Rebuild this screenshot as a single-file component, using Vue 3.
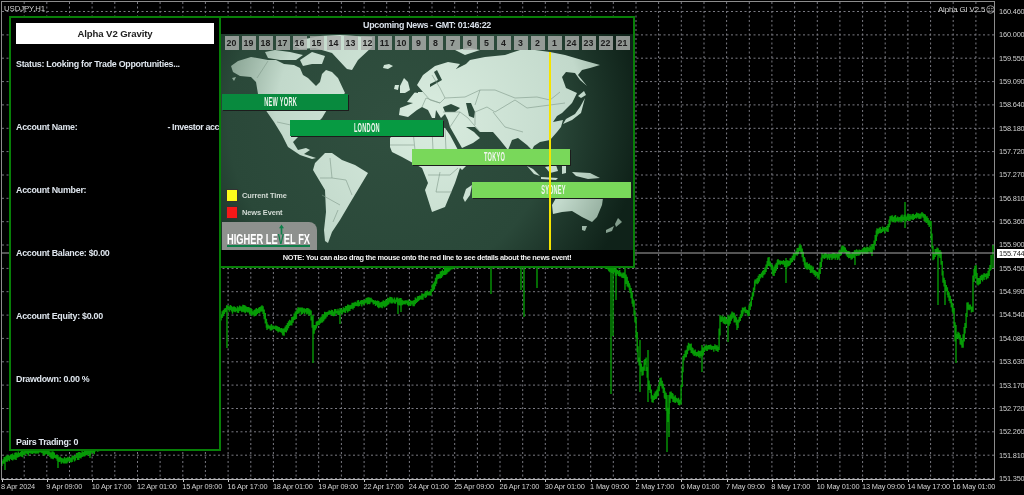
<script setup>
const prices = ['160.460','160.000','159.550','159.090','158.640','158.180','157.720','157.270','156.810','156.360','155.900','155.450','154.990','154.540','154.080','153.630','153.170','152.720','152.260','151.810','151.350']
const times = ['8 Apr 2024','9 Apr 09:00','10 Apr 17:00','12 Apr 01:00','15 Apr 09:00','16 Apr 17:00','18 Apr 01:00','19 Apr 09:00','22 Apr 17:00','24 Apr 01:00','25 Apr 09:00','26 Apr 17:00','30 Apr 01:00','1 May 09:00','2 May 17:00','6 May 01:00','7 May 09:00','8 May 17:00','10 May 01:00','13 May 09:00','14 May 17:00','16 May 01:00']
const hours = [20,19,18,17,16,15,14,13,12,11,10,9,8,7,6,5,4,3,2,1,24,23,22,21]
const stats = ['Status: Looking for Trade Opportunities...','Account Number:','Account Balance: $0.00','Account Equity: $0.00','Drawdown: 0.00 %','Pairs Trading: 0']

const gridPath = (() => {
  let d = ''
  for (let k = 0; k < 44; k++) d += `M${(1.5 + 22.66 * k).toFixed(1)} 2V479`
  for (let k = 0; k < 21; k++) d += `M2 ${(11.5 + 23.35 * k).toFixed(1)}H994`
  return d
})()

const pts = [[2,462],[5,459],[15,456],[25,452],[40,450],[55,456],[58,460],[70,459],[85,453],[91,451],[120,440],[215,330],[220,317],[227,307],[233,310],[243,308],[253,313],[262,308],[267,327],[277,328],[283,332],[292,320],[298,310],[310,312],[313,330],[317,323],[327,313],[340,312],[353,305],[370,300],[380,305],[390,300],[403,302],[412,303],[423,295],[430,293],[437,277],[450,267],[470,258],[520,262],[560,258],[600,262],[612,270],[625,277],[630,290],[633,303],[635,320],[638,360],[642,372],[645,360],[648,382],[652,400],[657,392],[660,380],[665,396],[667,420],[670,394],[673,398],[680,402],[683,358],[689,345],[693,352],[700,355],[705,347],[718,348],[720,318],[728,322],[732,314],[737,324],[743,309],[748,313],[755,282],[765,270],[768,260],[773,272],[778,262],[788,264],[795,254],[800,247],[805,264],[812,270],[818,276],[822,256],[838,256],[842,248],[850,256],[857,252],[870,249],[873,247],[877,231],[887,229],[890,219],[903,218],[910,217],[922,215],[927,220],[930,224],[932,247],[933,258],[936,250],[940,254],[943,280],[948,294],[953,310],[955,338],[958,335],[962,345],[965,325],[967,305],[972,310],[973,278],[975,268],[977,282],[983,276],[987,275],[990,268],[992,250]]
const wicks = [[5,460,470],[58,455,468],[90,448,458],[227,305,348],[313,315,363],[340,308,324],[398,300,314],[401,298,312],[491,262,294],[521,262,290],[524,262,317],[537,262,288],[611,262,394],[613,262,336],[616,262,300],[625,262,290],[640,340,392],[648,350,402],[667,395,452],[669,395,437],[702,345,372],[728,315,342],[737,320,330],[786,258,283],[855,250,265],[872,244,256],[905,202,228],[938,250,305],[945,280,305],[956,325,363],[993,245,268]]
const barPath = (() => {
  let seed = 7
  const rnd = () => (seed = (seed * 16807) % 2147483647) / 2147483647
  let d = ''
  let prev = pts[0][1]
  for (let i = 0; i < pts.length - 1; i++) {
    const [x1, y1] = pts[i], [x2, y2] = pts[i + 1]
    for (let x = x1; x < x2; x += 1.1) {
      const y = y1 + (y2 - y1) * (x - x1) / (x2 - x1)
      const top = Math.min(prev, y) - 1 - rnd() * 2.5
      const bottom = Math.max(prev, y) + 1.2 + rnd() * 3
      d += `M${x.toFixed(1)} ${top.toFixed(1)}V${bottom.toFixed(1)}`
      prev = y
    }
  }
  for (const [x, a, b] of wicks) d += `M${x} ${a}V${b}`
  return d
})()

const land = [
  // North America
  'M231 66L238 61L251 57L268 60L276 60L284 64L294 65L300 68L303 75L308 78L316 86L320 82L322 74L326 70L332 72L338 78L345 93L338 100L330 105L325 113L322 118L318 122L316 130L310 134L306 136L298 137L293 142L298 150L306 148L310 150L304 154L316 158L312 159L300 155L288 147L282 135L274 122L267 112L262 104L258 94L256 82L251 77L240 76L233 72Z',
  // Arctic islands
  'M265 52L275 50L290 52L303 55L296 60L280 60L268 58Z','M300 60L312 52L325 56L322 64L312 64L303 66Z','M232 78L236 77L234 81Z',
  // South America
  'M325 153L332 153L342 160L355 165L368 173L362 183L350 203L340 220L332 232L328 243L325 241L324 230L326 212L325 190L313 170L315 163Z',
  // Greenland
  'M293 45L300 40L320 36L340 35L372 37L372 47L358 60L352 70L347 69L345 67L332 53L315 48L300 49Z',
  'M384 65L389 64L393 66L388 69L383 68Z',
  // Ireland/UK
  'M400 86L404 78L408 82L410 90L405 93L400 93Z','M395 85L399 85L398 90L394 89Z',
  // Eurasia
  'M417 85L423 75L435 66L448 62L460 64L456 69L466 64L470 60L485 57L505 55L520 50L535 50L550 52L565 55L582 60L600 65L590 68L582 70L578 75L587 86L580 80L575 73L566 72L562 77L566 88L577 93L572 103L562 113L557 116L553 122L563 120L561 127L557 132L550 140L540 142L534 146L532 150L527 145L518 138L512 140L508 150L500 140L493 132L480 132L475 127L466 127L474 132L480 138L473 143L462 148L450 127L448 120L445 114L441 118L436 110L435 118L432 118L428 110L422 107L417 110L408 117L399 115L400 108L413 103L407 102L415 92L423 92Z',
  // Japan & islands
  'M580 107L585 98L581 113L572 120L563 124L566 119L575 114Z','M578 96L584 91L586 95L581 98Z','M455 50L470 48L480 50L465 55Z',
  // Africa
  'M390 147L390 138L400 128L412 122L430 126L445 128L450 135L458 150L468 150L478 150L472 160L462 170L460 168L455 183L445 207L432 212L425 190L428 183L422 168L402 157L392 152Z',
  'M472 185L470 195L465 202L463 198L466 189Z',
  // SE Asia and Indonesia
  'M527 166L533 169L540 176L534 174Z','M541 177L558 178L556 180L541 179Z','M545 167L556 165L558 171L550 173Z','M562 166L566 165L566 173L562 174Z','M572 172L590 173L600 178L588 179L576 176Z',
  // Australia
  'M552 205L556 198L570 192L603 198L602 205L597 217L592 222L582 217L572 211L562 212L553 214Z','M582 226L587 226L585 231L582 230Z',
  // New Zealand
  'M618 218L622 222L616 227L615 224Z','M606 230L614 226L612 231L606 233Z'
]
const seas = [
  'M430 87L442 80L437 70L434 72L438 80L430 84Z',
  'M443 107L451 104L460 108L455 112L445 112Z',
  'M466 103L471 103L475 112L474 118L469 116Z',
  'M412 92L418 90L418 93Z'
]
const borders = 'M268 61L257 78M277 122L300 127M312 100L262 103M465 97L480 90L495 90L515 98L537 97L550 100L560 92M487 107L495 112L515 100L527 108L550 105L565 103M493 112L505 127L523 132M480 90L475 105M487 107L475 112L475 125M423 92L430 100L440 103L445 98L465 97M432 75L440 88L445 98M422 107L426 98L440 103M443 112L460 112L468 118L480 132M460 112L450 127M432 128L433 150M412 122L415 150M445 128L446 150M428 175L450 175L458 168M436 192L452 192M440 172L436 192M330 158L332 178L346 180L352 195M320 178L332 178M322 195L340 205M333 222L338 210M390 145L414 145'
</script>

<template>
  <div class="terminal">
    <main class="chart">
      <svg class="plot" viewBox="2 2 992 477" aria-hidden="true">
        <path :d="gridPath" class="grid-lines" />
        <path :d="barPath" class="bars" />
        <path d="M2 253H994" class="price-line" />
      </svg>
      <span class="symbol">USDJPY,H1</span>
      <span class="ea-label">Alpha GI V2.5
        <svg class="smile" viewBox="0 0 10 10" aria-hidden="true"><circle cx="5" cy="5" r="4.2" /><circle cx="3.5" cy="4" r=".5" /><circle cx="6.5" cy="4" r=".5" /><path d="M3 6.2Q5 8 7 6.2" /></svg>
      </span>

      <section class="side-panel">
        <h1 class="panel-title">Alpha V2 Gravity</h1>
        <ul class="stat-list">
          <li>{{ stats[0] }}</li>
          <li class="name-row"><span>Account Name:</span><i class="redacted"></i><span class="investor">- Investor acc</span></li>
          <li v-for="s in stats.slice(1)" :key="s">{{ s }}</li>
        </ul>
      </section>

      <section class="news-panel">
        <h2 class="news-title">Upcoming News - GMT: 01:46:22</h2>
        <div class="stage">
          <svg class="map" viewBox="221 34 412 216" aria-hidden="true">
            <defs>
              <radialGradient id="sea" gradientUnits="userSpaceOnUse" cx="390" cy="120" r="250">
                <stop offset="0" stop-color="#304f3f" />
                <stop offset=".65" stop-color="#2a4839" />
                <stop offset="1" stop-color="#0f2219" />
              </radialGradient>
              <radialGradient id="landfill" gradientUnits="userSpaceOnUse" cx="430" cy="120" r="220">
                <stop offset="0" stop-color="#d9ecdf" />
                <stop offset=".7" stop-color="#c2d9cb" />
                <stop offset="1" stop-color="#7b9786" />
              </radialGradient>
            </defs>
            <rect x="221" y="34" width="412" height="216" fill="url(#sea)" />
            <path v-for="(d, i) in land" :key="i" :d="d" fill="url(#landfill)" />
            <path v-for="d in seas" :key="d" :d="d" class="inland-sea" />
            <path :d="borders" class="borders" />
          </svg>
          <div class="hour-row">
            <span v-for="h in hours" :key="h" class="hour">{{ h }}</span>
          </div>
          <div class="session ny"><span>NEW YORK</span></div>
          <div class="session ldn"><span>LONDON</span></div>
          <div class="session tyo"><span>TOKYO</span></div>
          <div class="session syd"><span>SYDNEY</span></div>
          <div class="now-line"></div>
          <ul class="legend">
            <li><i class="swatch yellow"></i>Current Time</li>
            <li><i class="swatch red"></i>News Event</li>
          </ul>
          <div class="logo">
            <div class="logo-line">
              <span class="logo-text">HIGHER LE<span class="logo-v">V</span>EL FX</span>
              <svg class="logo-arrow" viewBox="0 0 6 12" aria-hidden="true"><path d="M3 0L6 4.5H4V12H2V4.5H0Z" /></svg>
            </div>
          </div>
        </div>
        <p class="note">NOTE: You can also drag the mouse onto the red line to see details about the news event!</p>
      </section>
    </main>

    <aside class="price-axis">
      <span v-for="p in prices" :key="p">{{ p }}</span>
      <b class="price-tag">155.744</b>
    </aside>

    <footer class="time-axis">
      <span v-for="t in times" :key="t" class="tick">{{ t }}</span>
    </footer>
  </div>
</template>

<style scoped>
* { box-sizing: border-box; }
.terminal {
  width: 1024px; height: 495px; background: #000; overflow: hidden;
  display: grid; grid-template-columns: 995px 29px; grid-template-rows: 480px 15px;
  padding: 1px 0 0 1px; grid-template-areas: "c p" "t t";
  font-family: "Liberation Sans", Arial, sans-serif; position: relative;
  filter: blur(.3px);
}
.chart { grid-area: c; position: relative; width: 994px; height: 479px; border: 1px solid #8c8c8c; border-bottom-color: #b8b8b8; }
.plot { display: block; width: 992px; height: 477px; }
.grid-lines { fill: none; stroke: #7a7a82; stroke-width: 1; stroke-dasharray: 2 2.5; }
.bars { fill: none; stroke: #069a06; stroke-width: 1.4; }
.price-line { stroke: #a9a9a9; stroke-width: 1; }
.symbol { position: absolute; left: 2px; top: 2px; font-size: 7.8px; letter-spacing: -.1px; line-height: 9px; color: #d0d0d0; }
.ea-label { position: absolute; left: 936px; top: 3px; display: flex; align-items: center; gap: 1px; font-size: 7.8px; letter-spacing: -.1px; line-height: 9px; color: #d0d0d0; white-space: nowrap; }
.smile { width: 9px; height: 9px; fill: none; stroke: #c4c4c4; stroke-width: .8; }

.side-panel { position: absolute; left: 7px; top: 14px; width: 212px; height: 435px; background: #000; border: 2px solid #077f07; padding: 5px 5px 0 5px; overflow: hidden; }
.panel-title { margin: 0; height: 21px; background: #fff; color: #202020; font-size: 9.6px; letter-spacing: -.1px; line-height: 21px; font-weight: 700; text-align: center; }
.stat-list { list-style: none; margin: 0; padding: 0; display: flex; flex-direction: column; gap: 52px; padding-top: 15px; color: #dfe6ee; font-size: 8.9px; letter-spacing: -.28px; line-height: 11px; font-weight: 700; white-space: nowrap; }
.name-row { display: flex; }
.redacted { width: 90px; flex: none; }
.investor { letter-spacing: -.4px; }

.news-panel { position: absolute; left: 217px; top: 14px; width: 416px; height: 252px; background: #000; border: 2px solid #077f07; display: flex; flex-direction: column; overflow: hidden; }
.news-title { margin: 0; height: 16px; flex: none; color: #d9e0ea; font-size: 8.9px; letter-spacing: -.3px; line-height: 15px; font-weight: 700; text-align: center; }
.stage { position: relative; flex: 1; overflow: hidden; }
.map { position: absolute; left: 0; top: 0; width: 412px; height: 216px; display: block; }
.inland-sea { fill: #2d4b3c; }
.borders { fill: none; stroke: #7f9889; stroke-width: .6; }
.hour-row { position: relative; display: flex; gap: 3px; padding: 2px 0 0 3.5px; }
.hour { width: 14px; height: 14px; flex: none; background: rgba(172, 175, 172, .82); color: #1c1c1c; font-size: 8.8px; line-height: 14px; font-weight: 700; text-align: center; }
.session { position: absolute; height: 16px; display: flex; align-items: center; justify-content: center; color: #f2f6f0; font-size: 12.5px; font-weight: 700; box-shadow: 1px 1px 0 #1c1c1c; }
.session span { display: inline-block; transform: scaleX(.45); letter-spacing: .6px; white-space: nowrap; }
.ny { left: 1px; top: 60px; width: 126px; background: #088a3e; padding-right: 8px; }
.ldn { left: 69px; top: 86px; width: 153px; background: #079a42; }
.tyo { left: 191px; top: 115px; width: 158px; background: #79d85a; padding-left: 8px; }
.syd { left: 251px; top: 148px; width: 159px; background: #79d85a; padding-left: 4px; }
.now-line { position: absolute; left: 328px; top: 18px; bottom: 0; width: 2px; background: #f5e400; }
.legend { position: absolute; left: 5px; top: 155px; margin: 0; padding: 0; list-style: none; color: #d4dcd6; font-size: 7.4px; letter-spacing: -.1px; font-weight: 700; display: flex; flex-direction: column; gap: 4px; }
.legend li { display: flex; align-items: center; gap: 4px; height: 13px; }
.swatch { width: 12px; height: 13px; border: 1px solid #333; }
.yellow { background: #fbfb1c; }
.red { background: #f51818; }
.logo { position: absolute; left: 1px; bottom: 0; width: 95px; height: 28px; background: #8e918e; border-radius: 0 8px 0 0; padding: 10px 0 0 5px; }
.logo-line { position: relative; width: 83px; height: 15px; border-bottom: 2px solid #0e7f4a; }
.logo-text { display: block; width: 140px; transform: scaleX(.6); transform-origin: left; color: #fff; font-size: 15.5px; line-height: 13px; font-weight: 700; white-space: nowrap; }
.logo-v { color: #0e7f4a; }
.logo-arrow { position: absolute; left: 52px; top: -8px; width: 5px; height: 11px; fill: #0e7f4a; }
.note { margin: 0; height: 16px; flex: none; color: #f0f0f0; font-size: 7.4px; letter-spacing: -.3px; line-height: 15px; font-weight: 700; text-align: center; white-space: nowrap; }

.price-axis { grid-area: p; position: relative; margin: -1px 0 0; display: flex; flex-direction: column; padding-left: 3px; color: #d0d0d0; font-size: 7.4px; letter-spacing: -.17px; }
.price-axis span { height: 23.35px; line-height: 23.35px; flex: none; }
.price-tag { position: absolute; left: 1px; top: 249px; width: 28px; height: 9px; background: #fff; color: #222; font-weight: 400; font-size: 7.4px; line-height: 9px; padding-left: 2px; }
.time-axis { grid-area: t; display: flex; margin-left: -1px; color: #d0d0d0; font-size: 7.4px; letter-spacing: -.17px; padding-left: 1px; }
.tick { width: 45.32px; flex: none; white-space: nowrap; padding-top: 1px; line-height: 9px; position: relative; }
.tick::before { content: ""; position: absolute; left: .5px; top: -1px; width: 1px; height: 2px; background: #c8c8c8; }
</style>
